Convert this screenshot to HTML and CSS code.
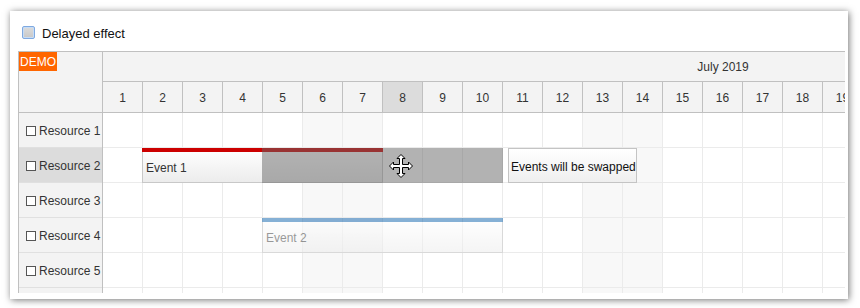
FILE: index.html
```html
<!DOCTYPE html>
<html>
<head>
<meta charset="utf-8">
<link rel="stylesheet" href="styles.css">
</head>
<body>
<div class="page">
  <div class="panel">
    <div class="toolbar">
      <span class="chk"></span>
      <span class="chk-label">Delayed effect</span>
    </div>
    <div class="scheduler">
      <div class="rowheaders">
        <div class="corner"><span class="demo">DEMO</span></div>
        <div class="rh"><span class="box"></span>Resource 1</div>
        <div class="rh sel"><span class="box"></span>Resource 2</div>
        <div class="rh"><span class="box"></span>Resource 3</div>
        <div class="rh"><span class="box"></span>Resource 4</div>
        <div class="rh"><span class="box"></span>Resource 5</div>
        <div class="rh"></div>
      </div>
      <div class="timeline">
        <div class="hrow month"><div class="mcell">July 2019</div></div>
        <div class="hrow days">
          <div class="dcell">1</div><div class="dcell">2</div><div class="dcell">3</div><div class="dcell">4</div><div class="dcell">5</div><div class="dcell">6</div><div class="dcell">7</div><div class="dcell hl">8</div><div class="dcell">9</div><div class="dcell">10</div><div class="dcell">11</div><div class="dcell">12</div><div class="dcell">13</div><div class="dcell">14</div><div class="dcell">15</div><div class="dcell">16</div><div class="dcell">17</div><div class="dcell">18</div><div class="dcell">19</div><div class="dcell"></div>
        </div>
        <div class="row">
          <div class="c"></div><div class="c"></div><div class="c"></div><div class="c"></div><div class="c"></div><div class="c we"></div><div class="c we"></div><div class="c"></div><div class="c"></div><div class="c"></div><div class="c"></div><div class="c"></div><div class="c we"></div><div class="c we"></div><div class="c"></div><div class="c"></div><div class="c"></div><div class="c"></div><div class="c"></div><div class="c"></div>
        </div>
        <div class="row">
          <div class="c"></div><div class="c"></div><div class="c"></div><div class="c"></div><div class="c"></div><div class="c we"></div><div class="c we"></div><div class="c"></div><div class="c"></div><div class="c"></div><div class="c"></div><div class="c"></div><div class="c we"></div><div class="c we"></div><div class="c"></div><div class="c"></div><div class="c"></div><div class="c"></div><div class="c"></div><div class="c"></div>
          <div class="event ev1"><div class="ev-inner">Event 1</div><div class="ev-bar red"></div></div>
          <div class="shadow"></div>
          <div class="swap-tip">Events will be swapped</div>
          <svg class="cursor" width="24" height="24" viewBox="0 0 24 24"><polygon points="12,0.5 16,4.5 13.5,4.5 13.5,10.5 19.5,10.5 19.5,8 23.5,12 19.5,16 19.5,13.5 13.5,13.5 13.5,19.5 16,19.5 12,23.5 8,19.5 10.5,19.5 10.5,13.5 4.5,13.5 4.5,16 0.5,12 4.5,8 4.5,10.5 10.5,10.5 10.5,4.5 8,4.5" fill="#fff" stroke="#000" stroke-width="1" stroke-linejoin="miter"/></svg>
        </div>
        <div class="row">
          <div class="c"></div><div class="c"></div><div class="c"></div><div class="c"></div><div class="c"></div><div class="c we"></div><div class="c we"></div><div class="c"></div><div class="c"></div><div class="c"></div><div class="c"></div><div class="c"></div><div class="c we"></div><div class="c we"></div><div class="c"></div><div class="c"></div><div class="c"></div><div class="c"></div><div class="c"></div><div class="c"></div>
        </div>
        <div class="row">
          <div class="c"></div><div class="c"></div><div class="c"></div><div class="c"></div><div class="c"></div><div class="c we"></div><div class="c we"></div><div class="c"></div><div class="c"></div><div class="c"></div><div class="c"></div><div class="c"></div><div class="c we"></div><div class="c we"></div><div class="c"></div><div class="c"></div><div class="c"></div><div class="c"></div><div class="c"></div><div class="c"></div>
          <div class="event ev2"><div class="ev-inner">Event 2</div><div class="ev-bar blue"></div></div>
        </div>
        <div class="row">
          <div class="c"></div><div class="c"></div><div class="c"></div><div class="c"></div><div class="c"></div><div class="c we"></div><div class="c we"></div><div class="c"></div><div class="c"></div><div class="c"></div><div class="c"></div><div class="c"></div><div class="c we"></div><div class="c we"></div><div class="c"></div><div class="c"></div><div class="c"></div><div class="c"></div><div class="c"></div><div class="c"></div>
        </div>
        <div class="row">
          <div class="c"></div><div class="c"></div><div class="c"></div><div class="c"></div><div class="c"></div><div class="c we"></div><div class="c we"></div><div class="c"></div><div class="c"></div><div class="c"></div><div class="c"></div><div class="c"></div><div class="c we"></div><div class="c we"></div><div class="c"></div><div class="c"></div><div class="c"></div><div class="c"></div><div class="c"></div><div class="c"></div>
        </div>
      </div>
    </div>
  </div>
</div>
</body>
</html>
```
FILE: styles.css
```css
* { box-sizing: border-box; }
html, body { margin: 0; padding: 0; background: #fff; }
body { font-family: "Liberation Sans", Arial, sans-serif; font-size: 12px; color: #333; }

.page { padding: 11px 12px 9px 10px; }

.panel {
  width: 838px;
  height: 288px;
  background: #fff;
  box-shadow: 1px 1px 7px rgba(0, 0, 0, 0.55);
  overflow: hidden;
}

.toolbar {
  height: 40px;
  display: flex;
  align-items: center;
  padding-left: 12px;
  padding-top: 2px;
}
.chk {
  width: 13px;
  height: 13px;
  border: 1px solid #7fa9e0;
  border-radius: 2px;
  background: linear-gradient(to bottom, #dcdcdc, #c8c8c8);
  box-shadow: inset 0 0 0 1px #c6dcf6;
}
.chk-label {
  margin-left: 7px;
  padding-top: 2px;
  font-size: 13px;
  color: #111;
}

.scheduler {
  margin-left: 8px;
  width: 827px;
  height: 242px;
  border-left: 1px solid #c0c0c0;
  border-top: 1px solid #c0c0c0;
  display: flex;
  overflow: hidden;
}

.rowheaders {
  flex: none;
  width: 84px;
  border-right: 1px solid #c0c0c0;
  background: #f3f3f3;
  display: flex;
  flex-direction: column;
}
.corner {
  flex: none;
  height: 61px;
  border-bottom: 1px solid #c0c0c0;
}
.demo {
  display: inline-block;
  background: #ff6600;
  color: #fff;
  padding: 1px 1px 0;
  line-height: 18px;
  height: 19px;
}
.rh {
  flex: none;
  height: 35px;
  border-bottom: 1px solid #e0e0e0;
  display: flex;
  align-items: center;
  padding-left: 7px;
  padding-top: 2px;
  color: #333;
  white-space: nowrap;
}
.rh.sel { background: #dcdcdc; }
.box {
  width: 10px;
  height: 10px;
  border: 1px solid #555;
  margin-right: 3px;
  background: #fff;
}

.timeline {
  flex: none;
  width: 1240px;
  display: flex;
  flex-direction: column;
}
.hrow {
  display: flex;
  background: #f3f3f3;
  border-bottom: 1px solid #c0c0c0;
  flex: none;
}
.month { height: 30px; }
.mcell {
  width: 1240px;
  display: flex;
  align-items: center;
  justify-content: center;
  padding-top: 1px;
  color: #333;
}
.days { height: 31px; }
.dcell {
  flex: none;
  width: 40px;
  border-right: 1px solid #c0c0c0;
  display: flex;
  align-items: center;
  justify-content: center;
  padding-top: 1px;
  color: #333;
}
.dcell.hl { background: #dcdcdc; }

.row {
  position: relative;
  display: flex;
  flex: none;
  height: 35px;
  border-bottom: 1px solid #ebebeb;
}
.c {
  flex: none;
  width: 40px;
  border-right: 1px solid #ebebeb;
}
.c.we { background: #f8f8f8; }

.event {
  position: absolute;
  top: 0;
  height: 35px;
}
.ev1 { left: 39px; width: 241px; }
.ev2 { left: 159px; width: 241px; opacity: 0.5; }
.ev-inner {
  position: absolute;
  inset: 0;
  border: 1px solid #c8c8c8;
  background: linear-gradient(to bottom, #ffffff, #ececec);
  display: flex;
  align-items: center;
  padding: 5px 0 0 3px;
  color: #333;
  white-space: nowrap;
  overflow: hidden;
}
.ev-bar {
  position: absolute;
  left: 0;
  right: 0;
  top: 0;
  height: 4px;
}
.ev-bar.red { background: #cc0000; }
.ev-bar.blue { background: #0e63ad; }

.shadow {
  position: absolute;
  left: 159px;
  top: 0;
  width: 241px;
  height: 35px;
  background: #666;
  opacity: 0.5;
}
.swap-tip {
  position: absolute;
  left: 405px;
  top: 0;
  width: 129px;
  height: 35px;
  border: 1px solid #c4c4c4;
  background: linear-gradient(to bottom, #ffffff, #efefef);
  display: flex;
  align-items: center;
  padding: 2px 0 0 2px;
  color: #111;
  white-space: nowrap;
}
.cursor {
  position: absolute;
  left: 286px;
  top: 6px;
}
```
